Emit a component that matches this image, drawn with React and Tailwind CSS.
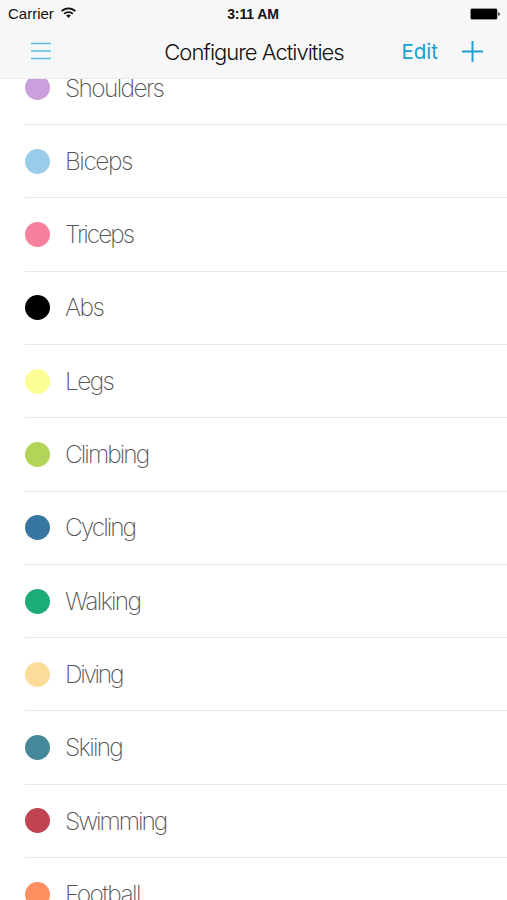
import React from 'react';

const activities = [
  { name: 'Shoulders', dot: 'bg-[#c9a0dc]', tracking: 'tracking-[-1.65px]' },
  { name: 'Biceps', dot: 'bg-[#99cce9]', tracking: 'tracking-[-1.45px]' },
  { name: 'Triceps', dot: 'bg-[#f77f9e]', tracking: 'tracking-[-2.05px]' },
  { name: 'Abs', dot: 'bg-black', tracking: 'tracking-[-1.5px]' },
  { name: 'Legs', dot: 'bg-[#fdfd96]', tracking: 'tracking-[-1.6px]' },
  { name: 'Climbing', dot: 'bg-[#b2d459]', tracking: 'tracking-[-1.95px]' },
  { name: 'Cycling', dot: 'bg-[#3776a1]', tracking: 'tracking-[-2px]' },
  { name: 'Walking', dot: 'bg-[#1cac78]', tracking: 'tracking-[-1.75px]' },
  { name: 'Diving', dot: 'bg-[#fcdc98]', tracking: 'tracking-[-2.3px]' },
  { name: 'Skiing', dot: 'bg-[#45889b]', tracking: 'tracking-[-1.75px]' },
  { name: 'Swimming', dot: 'bg-[#bf4351]', tracking: 'tracking-[-2.05px]' },
  { name: 'Football', dot: 'bg-[#fd8f60]', tracking: 'tracking-[-1.6px]' },
];

function WifiIcon() {
  return (
    <svg className="-mt-0.5 ml-[7px] h-[11px] w-[15px]" viewBox="0 0 15 11" fill="none" stroke="#111" strokeWidth="1.9">
      <path d="M0.7 4.2a9.6 9.6 0 0 1 13.6 0" />
      <path d="M3.2 6.9a6.1 6.1 0 0 1 8.6 0" />
      <path d="M7.5 10.9 5.2 8.5a3.3 3.3 0 0 1 4.6 0z" fill="#111" stroke="none" />
    </svg>
  );
}

function BatteryIcon() {
  return (
    <svg className="h-[12px] w-[30px]" viewBox="0 0 30 12">
      <rect x="0.3" y="0.3" width="27.2" height="11.4" rx="1.6" fill="#777" />
      <rect x="0.9" y="0.9" width="26" height="10.2" rx="1" fill="#000" />
      <path d="M28.2 4.2c1.1.2 1.6.9 1.6 1.8s-.5 1.6-1.6 1.8z" fill="#222" />
    </svg>
  );
}

function StatusBar() {
  return (
    <div className="grid h-[27px] grid-cols-[1fr_auto_1fr] items-center pl-2 pr-[9px] font-['Liberation_Sans',sans-serif] text-[#111]">
      <div className="flex items-center">
        <span className="text-[15px] leading-none">Carrier</span>
        <WifiIcon />
      </div>
      <span className="text-[14px] font-bold leading-none tracking-[-0.1px]">3:11 AM</span>
      <div className="-mr-0.5 flex justify-end">
        <BatteryIcon />
      </div>
    </div>
  );
}

function NavBar() {
  return (
    <div className="grid h-[49px] grid-cols-[1fr_auto_1fr] items-center pl-[31px] pr-6">
      <button className="-mt-0.5 w-5" aria-label="Menu">
        <svg className="h-[18px] w-5" viewBox="0 0 20 18" stroke="#5cbcdf" strokeWidth="1.6">
          <path d="M0 1.5h20M0 9h20M0 16.5h20" />
        </svg>
      </button>
      <h1 className="-ml-[3px] mr-[3px] text-[22px] font-light leading-none tracking-[-1px] text-[#111]">Configure Activities</h1>
      <div className="flex items-center justify-end text-[#1a9fd0]">
        <button className="mt-0.5 text-[20.5px] leading-none">Edit</button>
        <button className="ml-6" aria-label="Add">
          <svg className="h-[21px] w-[21px]" viewBox="0 0 21 21" stroke="currentColor" strokeWidth="1.9">
            <path d="M0 10.5h21M10.5 0v21" />
          </svg>
        </button>
      </div>
    </div>
  );
}

export default function App() {
  return (
    <div className="h-[900px] w-[507px] overflow-hidden bg-white font-['Inter',sans-serif]">
      <header className="relative z-10 h-[79px] border-b border-[#e9e9e9] bg-[#f7f7f7]">
        <StatusBar />
        <NavBar />
      </header>
      {/* list is scrolled part of the way under the header */}
      <ul className="-mt-[27.2px]">
        {activities.map((a) => (
          <li key={a.name} className="flex h-[73.3px] pl-[25px]">
            <div className="flex flex-1 items-center border-b border-[#e8e9e9]">
              <span className={`h-[25px] w-[25px] rounded-full ${a.dot}`} />
              <span className={`ml-[15px] text-[24.5px] font-extralight text-[#555] ${a.tracking}`}>{a.name}</span>
            </div>
          </li>
        ))}
      </ul>
    </div>
  );
}
